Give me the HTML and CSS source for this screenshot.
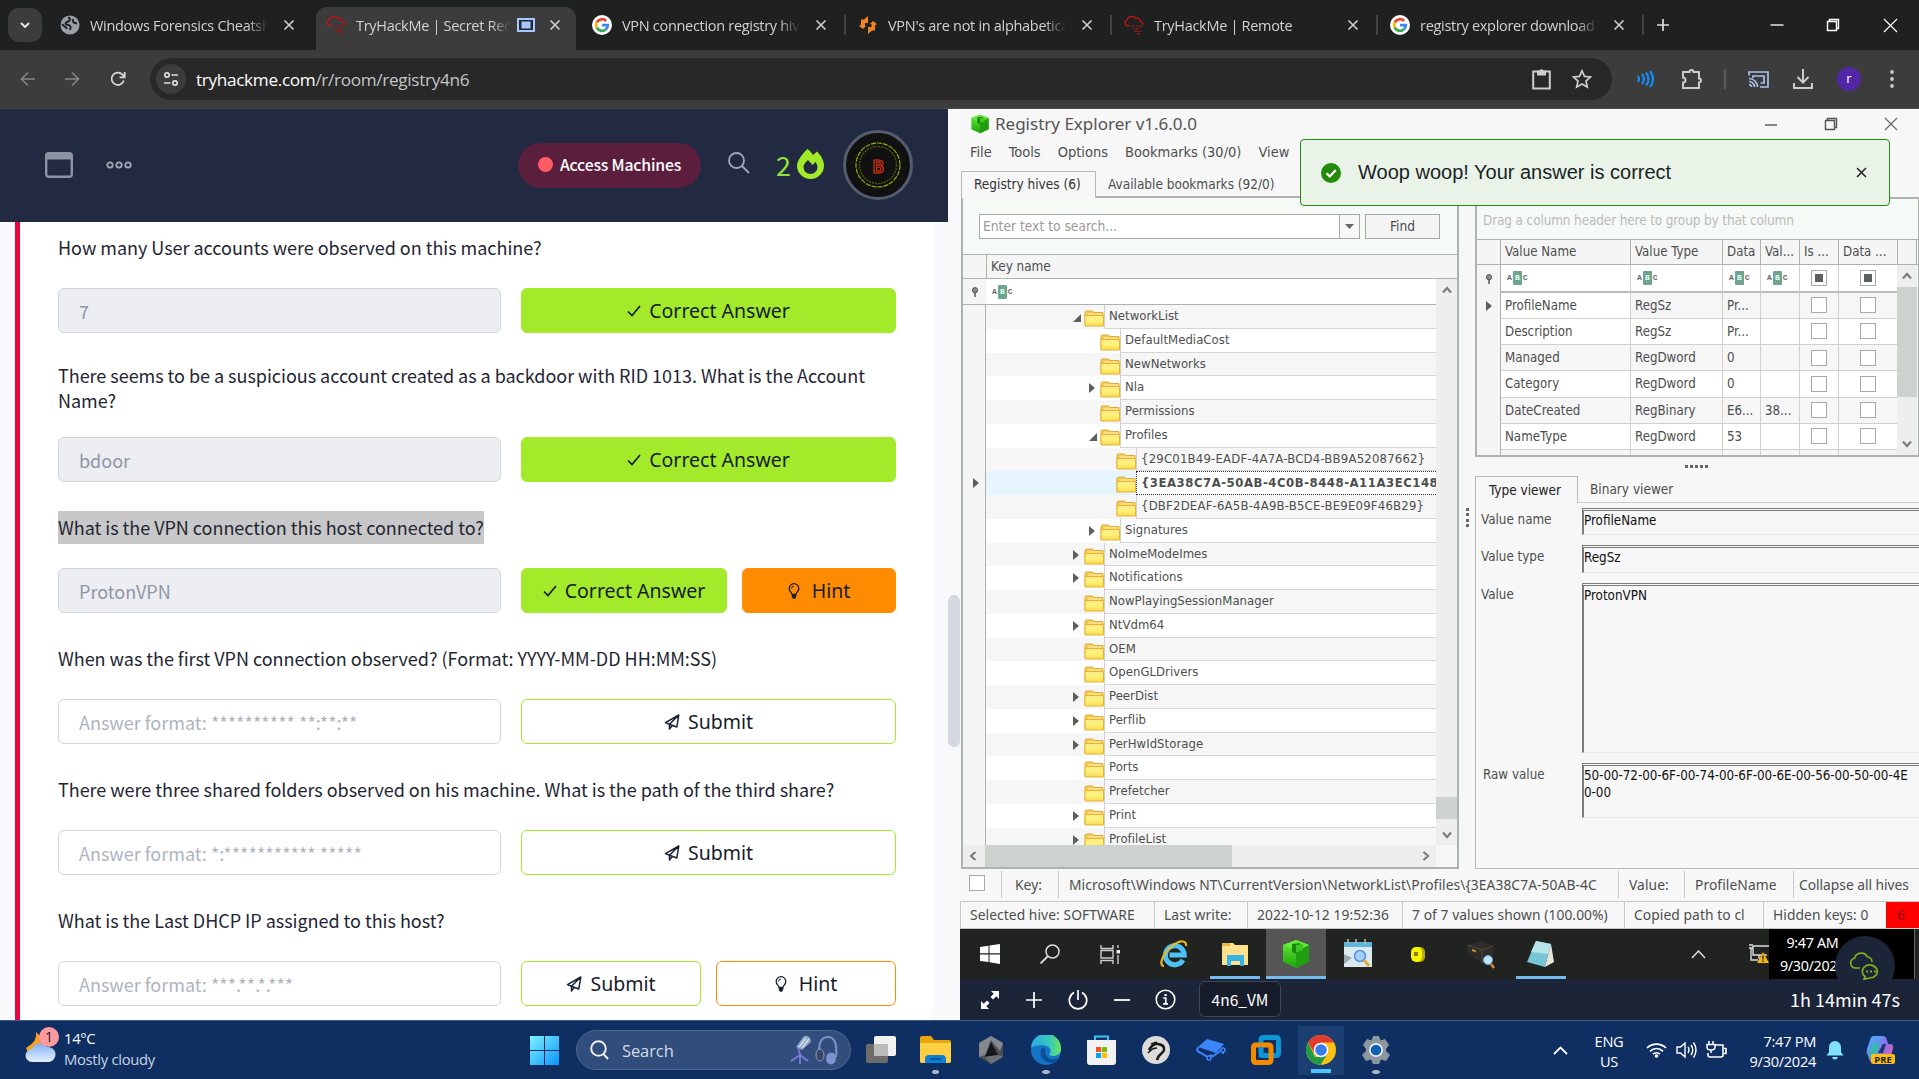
FILE: index.html
```html
<!DOCTYPE html>
<html lang="en">
<head>
<meta charset="utf-8">
<title>TryHackMe | Secret Recipe</title>
<link rel="stylesheet" href="styles.css">
</head>
<body>
<svg class="defs" width="0" height="0">
  <defs>
    <linearGradient id="gFolder" x1="0" y1="0" x2="0" y2="1"><stop offset="0" stop-color="#fdeb8c"/><stop offset=".5" stop-color="#fff27a"/><stop offset="1" stop-color="#f7d950"/></linearGradient>
    <linearGradient id="gWin" x1="0" y1="0" x2="1" y2="1"><stop offset="0" stop-color="#7ff3ff"/><stop offset="1" stop-color="#0a94fb"/></linearGradient>
    <linearGradient id="gCloud" x1="0" y1="0" x2="0" y2="1"><stop offset="0" stop-color="#7fb0f2"/><stop offset="1" stop-color="#e4efff"/></linearGradient>
    <linearGradient id="gEdge" x1="0" y1="0" x2="1" y2="0"><stop offset="0" stop-color="#2fa9e0"/><stop offset=".6" stop-color="#35c9c1"/><stop offset="1" stop-color="#6be25d"/></linearGradient>
    <linearGradient id="gGreen" x1="0" y1="0" x2="0" y2="1"><stop offset="0" stop-color="#66ee33"/><stop offset="1" stop-color="#1ea30c"/></linearGradient>
    <linearGradient id="gCop" x1="0" y1="0" x2="1" y2="1"><stop offset="0" stop-color="#35c1f5"/><stop offset=".5" stop-color="#8b6ff0"/><stop offset="1" stop-color="#fb5d8c"/></linearGradient>
  </defs>
  <symbol id="x" viewBox="0 0 12 12"><path d="M1.5 1.5l9 9M10.5 1.5l-9 9" stroke="currentColor" stroke-width="1.6" fill="none"/></symbol>
  <symbol id="google" viewBox="0 0 20 20"><circle cx="10" cy="10" r="10" fill="#fff"/><g fill="none" stroke-width="2.8"><path d="M14.1 5.9A5.8 5.8 0 0 0 4.8 7.4" stroke="#ea4335"/><path d="M4.8 7.4a5.8 5.8 0 0 0 0 5.2" stroke="#fbbc05"/><path d="M4.8 12.6a5.8 5.8 0 0 0 8.9 1.9" stroke="#34a853"/><path d="M13.7 14.5a5.8 5.8 0 0 0 2.1-4.3H10" stroke="#4285f4"/></g></symbol>
  <symbol id="thm" viewBox="0 0 22 22"><path d="M6 12H4a3.300 3.300 0 0 1-.3-6.500A4.800 4.800 0 0 1 12.500 3.800 4 4 0 0 1 18 7.500a2.500 2.500 0 0 1 2.500 3.500" fill="none" stroke="#d00d12" stroke-width="1.400"/><path d="M8 12h3M12.500 12h2M16 12.500h4M9.500 15h2M13 15h3M11 18h5M17 18h2M14 20.500h4" stroke="#96161a" stroke-width="1.500"/></symbol>
  <symbol id="folder" viewBox="0 0 20 17"><path d="M1 2.500Q1 1 2.500 1h6l1.500 1.500h9V15H1z" fill="#f2cb4e" stroke="#e0a93b"/><path d="M1 5.500h18.500V16H1z" fill="url(#gFolder)" stroke="#e8b232"/><path d="M4 4h14" stroke="#fff3b0"/></symbol>
  <symbol id="open" viewBox="0 0 8 8"><path d="M8 0v8H0z" fill="#5b5f5d"/></symbol>
  <symbol id="shut" viewBox="0 0 6 10"><path d="M0 0l6 5-6 5z" fill="#5b5f5d"/></symbol>
  <symbol id="pin" viewBox="0 0 8 10"><circle cx="4" cy="3.200" r="2.600" fill="#8a8d8c" stroke="#555"/><path d="M4 5.500V10" stroke="#555" stroke-width="1.500"/></symbol>
  <symbol id="check" viewBox="0 0 14 12"><path d="M1 6.500l4 4L13 1" fill="none" stroke="currentColor" stroke-width="1.700"/></symbol>
  <symbol id="send" viewBox="0 0 16 16"><path d="M14.800 1L1.500 8.600l4 1.700zM14.800 1L12.800 13l-7.300-2.700zM5.500 10.300V15l2.700-3.400" fill="none" stroke="#161f33" stroke-width="1.500" stroke-linejoin="round"/></symbol>
  <symbol id="bulb" viewBox="0 0 12 16"><path d="M4 11.500C4 9.500 1.200 8.600 1.200 5.500a4.800 4.800 0 0 1 9.600 0C10.800 8.600 8 9.500 8 11.500z" fill="none" stroke="#161f33" stroke-width="1.300"/><path d="M3.600 5.500A2.300 2.300 0 0 1 6 3.200" fill="none" stroke="#161f33"/><path d="M3.800 12h4.400v2L7 15.700H5L3.800 14z" fill="#161f33"/></symbol>
  <symbol id="up" viewBox="0 0 10 8"><path d="M1 6.500L5 2l4 4.500" fill="none" stroke="#7b7e7d" stroke-width="2.200"/></symbol>
  <symbol id="down" viewBox="0 0 10 8"><path d="M1 1.500L5 6l4-4.500" fill="none" stroke="#7b7e7d" stroke-width="2.200"/></symbol>
  <symbol id="cube" viewBox="0 0 30 30"><path d="M15 1l13 5v17l-13 6L2 23V6z" fill="url(#gGreen)"/><path d="M15 12l13-6v17l-13 6z" fill="#229f10"/><path d="M2 6l13-5 13 5-13 6z" fill="#63e936"/><path d="M11 5l8-1v9l-4 2-4-2z" fill="#17850b"/><path d="M15 6l7-1v6l-7 3z" fill="#3cc820"/></symbol>
  <symbol id="restore" viewBox="0 0 14 14"><path d="M3.500 3.500v-2h9v9h-2M1.500 3.500h9v9h-9z" fill="none" stroke="currentColor" stroke-width="1.400"/></symbol>
</svg>

<div class="screen">
  <header class="tabstrip">
    <div class="drop"><span><svg width="10" height="7" viewBox="0 0 10 7"><path d="M1 1l4 4 4-4" fill="none" stroke="#eee" stroke-width="1.800"/></svg></span></div>
    <div class="tab"><svg class="fav" viewBox="0 0 20 20"><circle cx="10" cy="10" r="9.500" fill="#9aa0a8"/><path d="M8 2.500c4 1 1 4-1 4.500s-2 2.500 1 3 3 2 2 5M13 4c-1 3 1 4 4 4.500M2 9c2 3 4 2 5 5" fill="none" stroke="#202222" stroke-width="2"/></svg><span class="label">Windows Forensics Cheatsh</span><svg class="close"><use href="#x"/></svg></div>
    <div class="tab active"><svg class="fav"><use href="#thm"/></svg><span class="label short">TryHackMe | Secret Reci</span><svg class="media" width="18" height="14" viewBox="0 0 18 14"><rect x="1" y="1" width="16" height="12" fill="#202a3c" stroke="#a8c7fa" stroke-width="2"/><rect x="4.500" y="3.500" width="9" height="7" fill="#a8c7fa"/></svg><svg class="close"><use href="#x"/></svg></div>
    <div class="tab"><svg class="fav"><use href="#google"/></svg><span class="label">VPN connection registry hiv</span><svg class="close"><use href="#x"/></svg><i></i></div>
    <div class="tab"><svg class="fav" viewBox="0 0 20 20"><path d="M10 1L6 4.500H3v5l-2 1.500 4 3 3-3H7V8h3zM10 19l4-3.500h3v-5L19 9l-4-3-3 3h1.500v3H10z" fill="#f58220"/></svg><span class="label">VPN's are not in alphabetica</span><svg class="close"><use href="#x"/></svg><i></i></div>
    <div class="tab"><svg class="fav"><use href="#thm"/></svg><span class="label">TryHackMe | Remote</span><svg class="close"><use href="#x"/></svg><i></i></div>
    <div class="tab"><svg class="fav"><use href="#google"/></svg><span class="label">registry explorer download</span><svg class="close"><use href="#x"/></svg><i></i></div>
    <div class="c"><svg width="14" height="14" viewBox="0 0 14 14"><path d="M7 1v12M1 7h12" stroke="#ddd" stroke-width="1.700"/></svg></div>
    <div></div>
    <div class="c"><svg width="14" height="14" viewBox="0 0 14 14"><path d="M.5 7h13" stroke="#fff" stroke-width="1.300"/></svg></div>
    <div class="c w"><svg width="14" height="14"><use href="#restore"/></svg></div>
    <div class="c"><svg width="15" height="15" viewBox="0 0 15 15"><path d="M1 1l13 13M14 1L1 14" stroke="#fff" stroke-width="1.200"/></svg></div>
  </header>

  <nav class="toolbar">
    <div class="c back"><svg width="16" height="16" viewBox="0 0 16 16"><path d="M15 8H2M8 1.500L1.500 8 8 14.500" fill="none" stroke="#858585" stroke-width="1.600"/></svg></div>
    <div class="c"><svg width="16" height="16" viewBox="0 0 16 16"><path d="M1 8h13M8 1.500L14.500 8 8 14.500" fill="none" stroke="#858585" stroke-width="1.600"/></svg></div>
    <div class="c"><svg width="16" height="16" viewBox="0 0 16 16"><path d="M13.800 9.500A6.200 6.200 0 1 1 12.500 3.700L14.500 6M14.700 1v5.300H9.500" fill="none" stroke="#d6d6d6" stroke-width="1.800"/></svg></div>
    <div class="omnibox">
      <span class="site"><svg width="16" height="16" viewBox="0 0 16 16"><g fill="none" stroke="#ddd" stroke-width="1.700"><circle cx="4" cy="4" r="2.200"/><path d="M8.500 4H15M1 12h6.500"/><circle cx="12" cy="12" r="2.200"/></g></svg></span>
      <span class="url"><b>tryhackme.com</b>/r/room/registry4n6</span>
      <svg width="19" height="22" viewBox="0 0 19 22"><path d="M1.200 3.500h16.600v17H1.200z" fill="none" stroke="#ccc" stroke-width="2"/><path d="M5 2.500h2.500a2.200 2.200 0 0 1 4 0H14v5H5z" fill="#ccc"/></svg>
      <svg class="star" width="20" height="20" viewBox="0 0 20 20"><path d="M10 1.800l2.500 5.600 6 .6-4.500 4 1.300 6-5.300-3.100L4.700 18 6 12 1.500 8l6-.6z" fill="none" stroke="#ccc" stroke-width="1.700"/></svg>
    </div>
    <div class="c"><svg width="18" height="18" viewBox="0 0 18 18"><path d="M2 6q2 3 0 6M6 4q4 5 0 10M10 2.500q5 6.500 0 13M14 1q6 8 0 16" fill="none" stroke="#168cf0" stroke-width="2.200"/></svg></div>
    <div class="c"><svg width="22" height="22" viewBox="0 0 22 22"><path d="M2 4h6.500a2 2 0 0 1 4 0H18v6.500a2 2 0 0 1 0 4V20H2v-5.500a2.500 2.500 0 0 0 0-5z" fill="none" stroke="#ccc" stroke-width="2"/></svg></div>
    <div class="c"><i class="vr"></i></div>
    <div class="c"><svg width="21" height="17" viewBox="0 0 21 17"><path d="M1 4.500V1h19v15h-8M5 7V5h11v7h-3.500M1 7.500a8.500 8.500 0 0 1 8.500 8.500M1 10.500A5.500 5.500 0 0 1 6.500 16M1 13.500A2.500 2.500 0 0 1 3.500 16" fill="none" stroke="#a8c1ea" stroke-width="1.700"/></svg></div>
    <div class="c"><svg width="20" height="20" viewBox="0 0 20 20"><path d="M10 0v13M4.500 8l5.500 5.500L15.500 8M1 14v5h18v-5" fill="none" stroke="#ccc" stroke-width="2"/></svg></div>
    <div class="c"><span class="profile">r</span></div>
    <div class="c"><svg width="4" height="18" viewBox="0 0 4 18"><g fill="#ccc"><circle cx="2" cy="2" r="1.900"/><circle cx="2" cy="9" r="1.900"/><circle cx="2" cy="16" r="1.900"/></g></svg></div>
  </nav>

  <div class="content">
    <main class="room">
      <div class="thmbar">
        <svg width="28" height="26" viewBox="0 0 28 26"><rect x="1.200" y="1.200" width="25.600" height="23.600" rx="2.500" fill="none" stroke="#8d93a3" stroke-width="2.400"/><path d="M1 2h26v5.500H1z" fill="#8d93a3"/></svg>
        <svg class="more" width="26" height="8" viewBox="0 0 26 8"><g fill="none" stroke="#a3a8b5" stroke-width="1.800"><circle cx="4" cy="4" r="2.700"/><circle cx="13" cy="4" r="2.700"/><circle cx="22" cy="4" r="2.700"/></g></svg>
        <div class="access"><i></i>Access Machines</div>
        <svg class="find" width="22" height="22" viewBox="0 0 22 22"><circle cx="8.500" cy="8.500" r="7.500" fill="none" stroke="#a3a8b5" stroke-width="1.800"/><path d="M14 14l7 7" stroke="#a3a8b5" stroke-width="1.800"/></svg>
        <span class="streak">2</span>
        <svg class="flame" width="27" height="30" viewBox="0 0 27 30"><path fill-rule="evenodd" d="M10.500 0c2 1.500 4.500 4 5.500 6l4-3.500C24 6.500 27 11.500 27 16.500A13.500 13.500 0 0 1 0 16.500C0 12 5.500 4.500 10.500 0zM11 11l4.500 5 3-3C20 15 20.500 17 20.500 18a7 7 0 0 1-14 0C6.500 16 9 12.500 11 11z" fill="#a3ea2a"/></svg>
        <div class="avatar"><svg width="48" height="48" viewBox="0 0 48 48"><circle cx="24" cy="24" r="22" fill="none" stroke="#9aa90a" stroke-width="1.200" stroke-dasharray="5 1"/><circle cx="24" cy="24" r="18.500" fill="none" stroke="#4b530c" stroke-width="1.500" stroke-dasharray="2 1"/></svg><b>B</b></div>
      </div>
      <div class="task">
        <div class="qa">
          <p>How many User accounts were observed on this machine?</p>
          <div class="row"><div class="input done">7</div><div class="btn ok"><svg width="14" height="12"><use href="#check"/></svg>Correct Answer</div></div>
          <p class="two">There seems to be a suspicious account created as a backdoor with RID 1013. What is the Account<br>Name?</p>
          <div class="row"><div class="input done">bdoor</div><div class="btn ok"><svg width="14" height="12"><use href="#check"/></svg>Correct Answer</div></div>
          <p><mark>What is the VPN connection this host connected to?</mark></p>
          <div class="row split"><div class="input done">ProtonVPN</div><div class="btn ok"><svg width="14" height="12"><use href="#check"/></svg>Correct Answer</div><div class="btn hint solid"><svg width="12" height="16"><use href="#bulb"/></svg>Hint</div></div>
          <p>When was the first VPN connection observed? (Format: YYYY-MM-DD HH:MM:SS)</p>
          <div class="row"><div class="input">Answer format: ********** **:**:**</div><div class="btn"><svg width="16" height="16"><use href="#send"/></svg>Submit</div></div>
          <p>There were three shared folders observed on his machine. What is the path of the third share?</p>
          <div class="row"><div class="input">Answer format: *:*********** *****</div><div class="btn"><svg width="16" height="16"><use href="#send"/></svg>Submit</div></div>
          <p>What is the Last DHCP IP assigned to this host?</p>
          <div class="row half"><div class="input">Answer format: ***.**.*.***</div><div class="btn"><svg width="16" height="16"><use href="#send"/></svg>Submit</div><div class="btn hint"><svg width="12" height="16"><use href="#bulb"/></svg>Hint</div></div>
        </div>
      </div>
    </main>
    <div class="gutter"><i></i></div>

    <section class="vm">
      <div class="title"><svg width="20" height="20"><use href="#cube"/></svg><span>Registry Explorer v1.6.0.0</span>
        <svg class="tmin" width="12" height="12" viewBox="0 0 12 12"><path d="M0 7h12" stroke="#555" stroke-width="1.400"/></svg><svg class="tmax" width="14" height="14"><use href="#restore"/></svg><svg class="tclose" width="14" height="14" viewBox="0 0 14 14"><path d="M1 1l12 12M13 1L1 13" stroke="#666" stroke-width="1.200"/></svg></div>
      <div class="menu"><span>File</span><span>Tools</span><span>Options</span><span>Bookmarks (30/0)</span><span>View</span></div>
      <div class="panes">
        <div class="hives">
          <div class="ltabs"><span class="on">Registry hives (6)</span><span>Available bookmarks (92/0)</span></div>
          <div class="lbox">
            <div class="searchrow"><div class="sbox"><span>Enter text to search...</span><i><svg width="9" height="5" viewBox="0 0 9 5"><path d="M0 0h9L4.500 5z" fill="#666"/></svg></i></div><div class="findbtn">Find</div></div>
            <div class="keyhead"><span></span><span>Key name</span></div>
            <div class="treewrap">
              <div class="tree">
                <div class="filter"><span><svg width="8" height="10"><use href="#pin"/></svg></span><em class="abc">A<b>B</b>C</em></div>
                <div class="rows">
                  <div class="gut"><svg width="6" height="10"><use href="#shut"/></svg></div>
                  <div class="list">
                    <div class="k l0"><svg class="ar"><use href="#open"/></svg><svg class="fo"><use href="#folder"/></svg><span>NetworkList</span></div>
                    <div class="k l1"><svg class="fo"><use href="#folder"/></svg><span>DefaultMediaCost</span></div>
                    <div class="k l1"><svg class="fo"><use href="#folder"/></svg><span>NewNetworks</span></div>
                    <div class="k l1"><svg class="ar sh"><use href="#shut"/></svg><svg class="fo"><use href="#folder"/></svg><span>Nla</span></div>
                    <div class="k l1"><svg class="fo"><use href="#folder"/></svg><span>Permissions</span></div>
                    <div class="k l1"><svg class="ar"><use href="#open"/></svg><svg class="fo"><use href="#folder"/></svg><span>Profiles</span></div>
                    <div class="k l2"><svg class="fo"><use href="#folder"/></svg><span>{29C01B49-EADF-4A7A-BCD4-BB9A52087662}</span></div>
                    <div class="k l2 sel"><svg class="fo"><use href="#folder"/></svg><span>{3EA38C7A-50AB-4C0B-8448-A11A3EC148</span></div>
                    <div class="k l2"><svg class="fo"><use href="#folder"/></svg><span>{DBF2DEAF-6A5B-4A9B-B5CE-BE9E09F46B29}</span></div>
                    <div class="k l1"><svg class="ar sh"><use href="#shut"/></svg><svg class="fo"><use href="#folder"/></svg><span>Signatures</span></div>
                    <div class="k l0"><svg class="ar sh"><use href="#shut"/></svg><svg class="fo"><use href="#folder"/></svg><span>NoImeModeImes</span></div>
                    <div class="k l0"><svg class="ar sh"><use href="#shut"/></svg><svg class="fo"><use href="#folder"/></svg><span>Notifications</span></div>
                    <div class="k l0"><svg class="fo"><use href="#folder"/></svg><span>NowPlayingSessionManager</span></div>
                    <div class="k l0"><svg class="ar sh"><use href="#shut"/></svg><svg class="fo"><use href="#folder"/></svg><span>NtVdm64</span></div>
                    <div class="k l0"><svg class="fo"><use href="#folder"/></svg><span>OEM</span></div>
                    <div class="k l0"><svg class="fo"><use href="#folder"/></svg><span>OpenGLDrivers</span></div>
                    <div class="k l0"><svg class="ar sh"><use href="#shut"/></svg><svg class="fo"><use href="#folder"/></svg><span>PeerDist</span></div>
                    <div class="k l0"><svg class="ar sh"><use href="#shut"/></svg><svg class="fo"><use href="#folder"/></svg><span>Perflib</span></div>
                    <div class="k l0"><svg class="ar sh"><use href="#shut"/></svg><svg class="fo"><use href="#folder"/></svg><span>PerHwIdStorage</span></div>
                    <div class="k l0"><svg class="fo"><use href="#folder"/></svg><span>Ports</span></div>
                    <div class="k l0"><svg class="fo"><use href="#folder"/></svg><span>Prefetcher</span></div>
                    <div class="k l0"><svg class="ar sh"><use href="#shut"/></svg><svg class="fo"><use href="#folder"/></svg><span>Print</span></div>
                    <div class="k l0"><svg class="ar sh"><use href="#shut"/></svg><svg class="fo"><use href="#folder"/></svg><span>ProfileList</span></div>
                  </div>
                </div>
              </div>
              <div class="vscroll"><svg width="10" height="8"><use href="#up"/></svg><i></i><svg width="10" height="8"><use href="#down"/></svg></div>
            </div>
            <div class="hscroll"><svg width="8" height="10" viewBox="0 0 8 10"><path d="M6.500 1L2 5l4.500 4" fill="none" stroke="#7b7e7d" stroke-width="2.200"/></svg><i></i><svg class="r" width="8" height="10" viewBox="0 0 8 10"><path d="M1.500 1L6 5 1.500 9" fill="none" stroke="#7b7e7d" stroke-width="2.200"/></svg><b></b></div>
          </div>
        </div>
        <div class="splitter"><i></i></div>
        <div class="values">
          <div class="grid">
            <div class="group">Drag a column header here to group by that column</div>
            <div class="gr head"><span></span><span>Value Name</span><span>Value Type</span><span>Data</span><span>Val...</span><span>Is ...</span><span>Data ...</span><span></span></div>
            <div class="gbody">
              <div class="grows">
                <div class="gr flt"><span class="m"><svg width="8" height="10"><use href="#pin"/></svg></span><span><em class="abc">A<b>B</b>C</em></span><span><em class="abc">A<b>B</b>C</em></span><span><em class="abc">A<b>B</b>C</em></span><span><em class="abc">A<b>B</b>C</em></span><span class="m"><i class="cb f"></i></span><span class="m"><i class="cb f"></i></span></div>
                <div class="gr alt"><span class="m"><svg width="6" height="10"><use href="#shut"/></svg></span><span class="focus">ProfileName</span><span>RegSz</span><span>Pr...</span><span></span><span class="m"><i class="cb"></i></span><span class="m"><i class="cb"></i></span></div>
                <div class="gr"><span></span><span>Description</span><span>RegSz</span><span>Pr...</span><span></span><span class="m"><i class="cb"></i></span><span class="m"><i class="cb"></i></span></div>
                <div class="gr alt"><span></span><span>Managed</span><span>RegDword</span><span>0</span><span></span><span class="m"><i class="cb"></i></span><span class="m"><i class="cb"></i></span></div>
                <div class="gr"><span></span><span>Category</span><span>RegDword</span><span>0</span><span></span><span class="m"><i class="cb"></i></span><span class="m"><i class="cb"></i></span></div>
                <div class="gr alt"><span></span><span>DateCreated</span><span>RegBinary</span><span>E6...</span><span>38...</span><span class="m"><i class="cb"></i></span><span class="m"><i class="cb"></i></span></div>
                <div class="gr"><span></span><span>NameType</span><span>RegDword</span><span>53</span><span></span><span class="m"><i class="cb"></i></span><span class="m"><i class="cb"></i></span></div>
                <div class="gr alt"><span></span><span></span><span></span><span></span><span></span><span class="m"><i class="cb"></i></span><span class="m"><i class="cb"></i></span></div>
              </div>
              <div class="vscroll g"><svg width="10" height="8"><use href="#up"/></svg><i></i><svg width="10" height="8"><use href="#down"/></svg></div>
            </div>
          </div>
          <div class="hdots"><i></i></div>
          <div class="vtabs"><span class="on">Type viewer</span><span>Binary viewer</span></div>
          <div class="form">
            <label>Value name</label><div class="field">ProfileName</div>
            <label>Value type</label><div class="field">RegSz</div>
            <label>Value</label><div class="field">ProtonVPN</div>
            <label class="raw">Raw value</label><div class="field bytes">50-00-72-00-6F-00-74-00-6F-00-6E-00-56-00-50-00-4E<br>0-00</div>
          </div>
        </div>
      </div>
      <div class="st1"><span class="m"><i class="cb"></i></span><span>Key:</span><span class="path"><u>Microsoft\Windows NT\CurrentVersion\NetworkList\Profiles\{3EA38C7A-50AB-4C</u></span><span>Value:</span><span>ProfileName</span><span>Collapse all hives</span></div>
      <div class="st2"><span>Selected hive: SOFTWARE</span><span>Last write:</span><span>2022-10-12 19:52:36</span><span>7 of 7 values shown (100.00%)</span><span>Copied path to cl</span><span>Hidden keys: 0</span><span class="red">6</span></div>
      <div class="vmtask">
        <div class="c"><svg width="20" height="20" viewBox="0 0 20 20"><path d="M0 3l8.500-1.200v7.500H0zM9.500 1.600L20 0v9.300H9.500zM0 10.500h8.500V18L0 17zM9.500 10.500H20V20L9.500 18.300z" fill="#fff"/></svg></div>
        <div class="c"><svg width="20" height="20" viewBox="0 0 20 20"><circle cx="12.500" cy="7.500" r="6.500" fill="none" stroke="#ddd" stroke-width="1.500"/><path d="M8 12L.5 19.500" stroke="#ddd" stroke-width="1.800"/></svg></div>
        <div class="c"><svg width="21" height="19" viewBox="0 0 21 19"><path d="M1 0v3.500h12V0M1 19v-3.500h12V19M1 5.500h12v7.500H1zM18 0v3M18 10v9" fill="none" stroke="#ccc" stroke-width="1.400"/><path d="M16.500 5h3.500v3.500h-3.500z" fill="#eee"/></svg></div>
        <div class="c"><svg width="28" height="29" viewBox="0 0 28 29"><path d="M23 20a9.500 9.500 0 1 1 1.300-5H9.500" fill="none" stroke="#4cc1f3" stroke-width="5"/><path d="M4 26C-2 26 3 13 12 6S27 1 26 6" fill="none" stroke="#eab922" stroke-width="2.200"/></svg></div>
        <div class="c run a"><svg width="28" height="24" viewBox="0 0 28 24"><path d="M1 1h11l2 2h13v20H1z" fill="#fde18c"/><path d="M1 1h8v3H1z" fill="#e7b642"/><path d="M6 13h17v11h-4v-5h-9v5H6z" fill="#35b2e6"/></svg></div>
        <div class="c on"><svg width="30" height="30"><use href="#cube"/></svg></div>
        <div class="c"><svg width="30" height="30" viewBox="0 0 30 30"><path d="M1 3h28v25H1z" fill="#dceaf0"/><path d="M1 3h28v5H1z" fill="#5fb5da"/><path d="M5 0v5M13 0v5M22 0v5" stroke="#bbb" stroke-width="1.500"/><path d="M1 15l8 4-8 6" fill="#9aa9b0"/><circle cx="17" cy="17" r="5.500" fill="#a4d0ff" stroke="#5292d8" stroke-width="1.500"/><path d="M21 21l5 6" stroke="#e6a93d" stroke-width="3"/></svg></div>
        <div class="c"><svg width="14" height="15" viewBox="0 0 14 15"><rect x="3" width="11" height="15" rx="5" fill="#b8a900"/><rect width="11" height="15" rx="5" fill="#f8f400"/><rect x="3" y="5" width="4" height="4" fill="#8a8310"/></svg></div>
        <div class="c"><svg width="30" height="30" viewBox="0 0 30 30"><path d="M1 6l15-4 11 5v13l-10 5L2 15z" fill="#2e2c29"/><path d="M1 6l15 5 11-4M16 11v13" stroke="#514b42" fill="none"/><path d="M6 10l4 1.500v2L6 12z" fill="#d98f22"/><circle cx="22" cy="21" r="4.500" fill="#bfe6fb" stroke="#7aa6c8"/><path d="M25 25l3 4" stroke="#d98640" stroke-width="2.500"/></svg></div>
        <div class="c run b"><svg width="30" height="28" viewBox="0 0 30 28"><path d="M10 1l15 3-6 23L1 22z" fill="#76c6d5"/><path d="M10 1l15 3-3 10L5 12z" fill="#b7e5ea"/><path d="M25 4l3 18-9 5z" fill="#e6e6dd"/></svg></div>
        <div></div>
        <div class="c"><svg width="15" height="9" viewBox="0 0 15 9"><path d="M1 8l6.500-7L14 8" fill="none" stroke="#ddd" stroke-width="1.500"/></svg></div>
        <div class="c e"><svg width="21" height="20" viewBox="0 0 21 20"><path d="M5 2h16M5 2v9h14M1 1h4M1 4h4M3 4v12h7M11 11v4" fill="none" stroke="#ddd" stroke-width="1.400"/><path d="M15 8l6 11H9z" fill="#f7b50d"/><path d="M15 11.500v4M15 16.500v1.500" stroke="#222" stroke-width="1.300"/></svg></div>
        <div class="clock">9:47 AM<br>9/30/2024</div>
        <div class="peek"></div>
      </div>
      <div class="vmbar">
        <div class="c"><svg width="20" height="20" viewBox="0 0 20 20"><path d="M11 1h8v8l-2.700-2.700L13 9.500 10.500 7l3.200-3.200zM9 19H1v-8l2.700 2.700L7 10.500 9.500 13l-3.200 3.200z" fill="#fff"/></svg></div>
        <div class="c"><svg width="16" height="16" viewBox="0 0 16 16"><path d="M8 0v16M0 8h16" stroke="#fff" stroke-width="1.700"/></svg></div>
        <div class="c"><svg width="20" height="20" viewBox="0 0 20 20"><path d="M6 2.500a8.700 8.700 0 1 0 8 0M10 0v10" fill="none" stroke="#fff" stroke-width="1.700"/></svg></div>
        <div class="c"><svg width="16" height="4" viewBox="0 0 16 4"><path d="M0 2h16" stroke="#fff" stroke-width="1.800"/></svg></div>
        <div class="c info"><svg width="21" height="21" viewBox="0 0 21 21"><circle cx="10.500" cy="10.500" r="9.300" fill="none" stroke="#fff" stroke-width="1.600"/><path d="M9.500 5h2.200v2H9.500z" fill="#fff"/><path d="M8.200 9h2.600v5.500M8 14.800h5" fill="none" stroke="#fff" stroke-width="1.700"/></svg></div>
        <div class="vmname">4n6_VM</div>
        <div class="timer">1h 14min 47s</div>
      </div>
      <div class="toast"><svg width="20" height="20" viewBox="0 0 20 20"><circle cx="10" cy="10" r="10" fill="#238a0c"/><path d="M5.500 10.200l3.300 3.200 6-6.300" fill="none" stroke="#fff" stroke-width="2.200"/></svg><span>Woop woop! Your answer is correct</span><svg width="11" height="11" viewBox="0 0 11 11"><path d="M1 1l9 9M10 1l-9 9" stroke="#222" stroke-width="1.500"/></svg></div>
      <div class="chat"><svg width="32" height="28" viewBox="0 0 32 28"><path d="M11 16H6a5 5 0 0 1-.5-9.800A7 7 0 0 1 18.500 5a5 5 0 0 1 4.500 5" fill="none" stroke="#7fae1f" stroke-width="1.700"/><path d="M16 24.500a7.500 6.500 0 1 1 5 1.500l-6 1.200z" fill="none" stroke="#7fae1f" stroke-width="1.700"/><path d="M17 19.500h2M21 19.500h2M25 19.500h2" stroke="#7fae1f" stroke-width="2"/></svg></div>
    </section>
  </div>

  <footer class="taskbar">
    <div class="weather">
      <svg width="38" height="38" viewBox="0 0 38 38"><path d="M13 6q2 9-10 16 2 6 8 6l10-14z" fill="#f9a01c"/><path d="M9 36a6.500 6.500 0 0 1 0-13 8.500 8.500 0 0 1 15-2 7.500 7.500 0 0 1 2 15z" fill="url(#gCloud)"/><circle cx="26" cy="11" r="10" fill="#fc9aa0"/><text x="26" y="16" text-anchor="middle" font-size="14" fill="#222">1</text></svg>
      <div>14°C<br><span>Mostly cloudy</span></div>
    </div>
    <div class="c"><svg width="29" height="29" viewBox="0 0 29 29"><path d="M0 0h14v14H0zM15 0h14v14H15zM0 15h14v14H0zM15 15h14v14H15z" fill="url(#gWin)"/></svg></div>
    <div class="wsearch"><svg width="19" height="20" viewBox="0 0 19 20"><circle cx="8.500" cy="8.500" r="7.300" fill="none" stroke="#eee" stroke-width="2"/><path d="M13.500 14l4.500 5" stroke="#eee" stroke-width="2"/></svg><span>Search</span>
      <svg width="50" height="32" viewBox="0 0 50 32"><path d="M8 13L15 3q4-3 7 1l1 4-9 8z" fill="#8ea1c8"/><path d="M11 13l7-9M14 14l7-9" stroke="#cfe3e4" stroke-width="1.500"/><path d="M10 14l2 7-9 6M12 21l8 6M12 19v11" fill="none" stroke="#7f7bd8" stroke-width="1.800"/><path d="M31 21Q30 3 40 3t8 20" fill="none" stroke="#7690c6" stroke-width="2.200"/><ellipse cx="32" cy="21" rx="4" ry="6" fill="#3e4562" stroke="#8b9ccb"/><ellipse cx="43" cy="24.500" rx="5" ry="6" fill="#7d93cf"/></svg></div>
    <div class="c"><svg width="30" height="30" viewBox="0 0 30 30"><rect y="9" width="22" height="19" rx="2" fill="#6d6c6b"/><rect x="8" y="1" width="22" height="20" rx="2" fill="#f1f1f1"/><path d="M8 9h14v12H8z" fill="#bcbcbc"/></svg></div>
    <div class="c dot"><svg width="31" height="28" viewBox="0 0 31 28"><path d="M0 2Q0 0 2 0h9l3 4h15q2 0 2 2v19q0 2-2 2H2q-2 0-2-2z" fill="#e9a60d"/><path d="M0 7h31v18q0 2-2 2H2q-2 0-2-2z" fill="#ffcf42"/><path d="M5 27v-4q0-4 4-4h13q4 0 4 4v4z" fill="#0f7ed6"/><path d="M10 23h11" stroke="#0a4d8c" stroke-width="1.500"/></svg></div>
    <div class="c"><svg width="28" height="30" viewBox="0 0 28 30"><path d="M14 1l12 7v14l-12 7L2 22V8z" fill="#4b5057"/><path d="M14 1l12 7-3 8L14 5 8 20l-6 2V8z" fill="#85898e"/><path d="M14 7l7 13-13 2z" fill="#15181c"/><path d="M8 22l13-2 5 2-12 7z" fill="#6b7076"/></svg></div>
    <div class="c dot"><svg width="30" height="30" viewBox="0 0 30 30"><circle cx="15" cy="15" r="15" fill="#1574c8"/><path d="M0 13A15 15 0 0 1 30 14c0 5-4 7-8 7-5 0-4-2-3-3 2-3-1-8-8-8S0 13 0 13z" fill="url(#gEdge)"/><path d="M11 13c-4 6 0 15 10 15l4-2c2-1 3-2 2.500-3-7 3-14 0-13-7 .2-2-2-4-3.500-3z" fill="#0d4f96"/></svg></div>
    <div class="c"><svg width="29" height="30" viewBox="0 0 29 30"><path d="M8 6V1.500h13V6" fill="none" stroke="#3cc1f5" stroke-width="2.200"/><path d="M0 5h29v22q0 3-3 3H3q-3 0-3-3z" fill="#f2f2f2"/><path d="M9 12h5v5H9z" fill="#f25022"/><path d="M15 12h5v5h-5z" fill="#7fba00"/><path d="M9 18h5v5H9z" fill="#00a4ef"/><path d="M15 18h5v5h-5z" fill="#ffb900"/></svg></div>
    <div class="c"><svg width="28" height="28" viewBox="0 0 28 28"><circle cx="14" cy="14" r="14" fill="#dcdbd9"/><path d="M7 14q4-7 9-6 7 1 6 6c-1 4-6 4-7 10" fill="none" stroke="#191919" stroke-width="2.600"/><path d="M6 17q4-5 9-5M9 8l6-2" fill="none" stroke="#191919" stroke-width="1.500"/></svg></div>
    <div class="c"><svg width="30" height="24" viewBox="0 0 30 24"><path d="M11 1l17 5-8 9L2 9z" fill="#3c85fa"/><path d="M3 9q-4 3 0 5l9 5 4-2M20 16l7-5v5M16 19l4-3" fill="none" stroke="#3c85fa" stroke-width="2"/><circle cx="13" cy="20" r="2" fill="#0f2f63" stroke="#3c85fa" stroke-width="1.500"/><circle cx="27" cy="12" r="2" fill="#0f2f63" stroke="#3c85fa" stroke-width="1.500"/></svg></div>
    <div class="c"><svg width="30" height="30" viewBox="0 0 30 30"><rect x="10" y="2.500" width="17.500" height="18" rx="2" fill="none" stroke="#0b96d6" stroke-width="5"/><rect x="2.500" y="10" width="17.500" height="17.500" rx="2" fill="none" stroke="#f38b00" stroke-width="5"/><path d="M10 12v8.500h7" fill="none" stroke="#0b96d6" stroke-width="4"/></svg></div>
    <div class="c chrome"><svg width="30" height="30" viewBox="0 0 30 30"><circle cx="15" cy="15" r="15" fill="#fbc116"/><path d="M2 7.500A15 15 0 0 1 28 7.500H15l-6.500 11z" fill="#e33b2e"/><path d="M2 7.500A15 15 0 0 0 14.500 30L21.500 18.700 15 22H9z" fill="#229a48"/><circle cx="15" cy="15" r="7.300" fill="#fff"/><circle cx="15" cy="15" r="5.800" fill="#3a7cec"/></svg></div>
    <div class="c dot"><svg width="30" height="28" viewBox="0 0 30 28"><path d="M12 0h6l1.500 4.500L24 3l4 6-3 4v2l4 4-4 6-5-1.500L18 28h-6l-2-4.500L5 25l-4-6 4-4v-2L2 9l4-6 4.500 1.500z" fill="#8b97a0"/><circle cx="15" cy="14" r="7" fill="#e8eef2"/><circle cx="15" cy="14" r="5.300" fill="#0e5fb4"/></svg></div>
    <div></div>
    <div class="c"><svg width="15" height="9" viewBox="0 0 15 9"><path d="M1 8l6.500-6.500L14 8" fill="none" stroke="#fff" stroke-width="1.800"/></svg></div>
    <div class="lang">ENG<br>US</div>
    <div class="c"><svg width="21" height="16" viewBox="0 0 21 16"><g fill="none" stroke="#fff" stroke-width="1.700"><path d="M1 6a13.500 13.500 0 0 1 19 0M4 9.300a9 9 0 0 1 13 0M7 12.200a5 5 0 0 1 7 0"/></g><circle cx="10.500" cy="14" r="1.800" fill="#fff"/></svg></div>
    <div class="c"><svg width="21" height="18" viewBox="0 0 21 18"><path d="M1 6h3.500L9 2v14l-4.500-4H1zM12 6q2 3 0 6M15 4q3.500 5 0 10M17.500 1.500q5 7.500 0 15" fill="none" stroke="#fff" stroke-width="1.400"/></svg></div>
    <div class="c"><svg width="22" height="18" viewBox="0 0 22 18"><path d="M10 4h8v10q0 2-2 2H5q-2 0-2-2v-2M19 7.500h2v5h-2" fill="none" stroke="#fff" stroke-width="1.600"/><path d="M4 0v3M8 0v3M2 3.500h8V6q0 3-4 3T2 6zM6 9v3" fill="none" stroke="#fff" stroke-width="1.500"/></svg></div>
    <div class="wclock">7:47 PM<br>9/30/2024</div>
    <div class="c"><svg width="18" height="20" viewBox="0 0 18 20"><path d="M3 7a6 6 0 0 1 12 0v5l2.500 3.500H.5L3 12z" fill="#80e2ff"/><path d="M6 17h6q-.5 2.500-3 2.500T6 17z" fill="#80e2ff"/></svg></div>
    <div class="c"><svg width="30" height="30" viewBox="0 0 30 30"><path d="M9 1h9q3 0 4 4l1 4h2q4 0 3 5l-3 9q-2 5-5 5H9q-4 0-5-4l-1-4q-2-1-1-6L5 5q1-4 4-4z" fill="url(#gCop)"/><path d="M10 8h5l-4 15H4q-1-3 1-8 2-7 5-7z" fill="#37b7b0"/><path d="M18 9h3l-3 9h-5z" fill="#143a70"/><rect x="6" y="19" width="24" height="10" rx="2" fill="#f8bd16"/><text x="18" y="27.500" text-anchor="middle" font-size="9.500" font-weight="700" fill="#222">PRE</text></svg></div>
  </footer>
</div>
</body>
</html>
```
FILE: styles.css
```css
* { box-sizing: border-box; }
body { margin: 0; font-family: "Open Sans", "Noto Sans", sans-serif; }
i, em { font-style: normal; }
svg { display: block; flex: none; }
.defs { position: absolute; }
.screen { width: 1919px; height: 1079px; overflow: hidden; display: grid; grid-template-rows: 50px 59px 911px 59px; }
.c { display: flex; align-items: center; justify-content: center; }

/* browser tabs */
.tabstrip { background: #1f2121; display: grid; grid-template-columns: 50px repeat(6, 266px) 34px 69px 56px 56px 58px; color: #ddd; }
.drop { display: flex; align-items: center; padding-left: 8px; }
.drop span { width: 34px; height: 34px; border-radius: 11px; background: #3c3c3c; display: flex; align-items: center; justify-content: center; }
.tab { display: flex; align-items: center; padding-left: 10px; font-size: 14.5px; letter-spacing: -.3px; color: #d0d2d2; }
.tab.active { background: #3c3c3c; border-radius: 11px 11px 0 0; margin: 7px 6px 0 0; padding-bottom: 7px; width: 260px; }
.fav { width: 20px; height: 20px; margin-right: 10px; }
.label { width: 178px; white-space: nowrap; overflow: hidden; -webkit-mask-image: linear-gradient(to right, #000 88%, transparent); mask-image: linear-gradient(to right, #000 88%, transparent); }
.label.short { width: 154px; }
.media { margin: 0 0 0 7px; }
.close { width: 12px; height: 12px; margin-left: 15px; }
.media + .close { margin-left: 14px; }
.tab i { width: 2px; height: 20px; background: #414343; margin-left: 17px; }
.w { color: #fff; }

/* address row */
.toolbar { background: #3c3c3c; border-bottom: 1px solid #4a4a46; display: grid; grid-template-columns: 50px 44px 48px 1470px 66px 28px 38px 28px 62px 30px 55px; }
.back { padding-left: 5px; }
.omnibox { height: 42px; margin: 8px 0 0 8px; width: 1462px; border-radius: 21px; background: #282828; display: flex; align-items: center; padding-right: 20px; }
.site { width: 30px; height: 30px; margin-left: 6px; border-radius: 50%; background: #3c3c3c; display: flex; align-items: center; justify-content: center; }
.url { flex: 1; margin-left: 10px; font-size: 17.200px; letter-spacing: -.33px; color: #c3c5c5; }
.url b { font-weight: 400; color: #fff; }
.star { margin-left: 21px; }
.vr { width: 2px; height: 20px; background: #5a5c5c; }
.profile { width: 24px; height: 24px; border-radius: 50%; background: #5127a7; color: #fff; font-size: 13px; line-height: 22px; text-align: center; }

/* page */
.content { display: grid; grid-template-columns: 948px 12px 959px; min-height: 0; }
.room { font-family: "Noto Sans CJK SC", "Noto Sans", sans-serif; background: #f9f9fb; display: grid; grid-template-rows: 113px 798px; min-height: 0; overflow: hidden; }
.thmbar { background: #212a41; display: flex; align-items: center; padding: 0 0 1px 45px; color: #fff; }
.more { margin-left: 33px; }
.access { margin-left: 386px; width: 183px; height: 45px; border-radius: 23px; background: #5b1e3d; display: flex; align-items: center; justify-content: center; gap: 7px; font-size: 15.800px; font-weight: 500; letter-spacing: -.2px; line-height: 43px; padding-bottom: 2px; }
.access i { width: 15px; height: 15px; border-radius: 50%; background: #ff5c67; }
.find { margin: 0 0 4px 27px; }
.streak { margin: 0 0 2px 26px; width: 15px; font-size: 27px; color: #8fe23a; }
.flame { margin-left: 6px; margin-bottom: 2px; }
.avatar { margin-left: 19px; width: 70px; height: 70px; border-radius: 50%; border: 3px solid #555c6f; background: #111; display: grid; place-items: center; }
.avatar > * { grid-area: 1 / 1; }
.avatar b { font-size: 17px; line-height: 1; color: #111; -webkit-text-stroke: 1.200px #d0300e; }
.task { margin: 0 15px; border-left: 5px solid #e8043f; background: #fff; overflow: hidden; }
.qa { padding: 13px 37px 0 38px; }
.qa p { margin: 33px 0 28px; height: 25px; line-height: 25px; font-size: 18px; letter-spacing: -.03px; color: #1f2633; white-space: nowrap; }
.qa p:first-child { margin-top: 0; }
.qa p.two { margin: 30px 0 24px; height: 50px; }
.qa mark { background: #c8c8c8; color: inherit; display: inline-block; height: 33px; line-height: 33px; margin-top: -4px; }
.row { display: grid; grid-template-columns: 443px 375px; grid-template-rows: 45px; column-gap: 20px; height: 45px; }
.row.split { grid-template-columns: 443px 20px 206px 15px 154px; column-gap: 0; }
.row.half { grid-template-columns: 443px 20px 180px 15px 180px; column-gap: 0; }
.row .btn:nth-child(2):not(:last-child) { grid-column: 3; }
.row .btn:nth-child(3) { grid-column: 5; }
.input { border: 1px solid #d1d5dd; border-radius: 6px; padding: 0 20px; line-height: 44px; height: 45px; font-size: 18px; color: #aeb4c0; white-space: nowrap; }
.input.done { background: #edeef2; color: #8f96a6; }
.btn { font-family: "Noto Sans", sans-serif; border: 1.500px solid #a3ea2a; border-radius: 6px; display: flex; align-items: center; justify-content: center; gap: 8px; font-size: 19.500px; line-height: 42px; color: #151c2b; }
.btn.ok { background: #a3ea2a; }
.btn.hint { border-color: #ff8c00; gap: 12px; }
.btn.solid { background: #ff8c00; }
.gutter { background: #f9f9fb; }
.gutter i { display: block; height: 152px; margin-top: 486px; border-radius: 6px; background: #d3d8e1; }

/* remote desktop */
.vm { position: relative; display: grid; grid-template-rows: 31px 31px 698px 32px 28px 50px 41px; background: #f7f7f7; color: #4c4f4e; font-family: "DejaVu Sans Condensed", "DejaVu Sans", sans-serif; font-stretch: condensed; font-size: 13px; min-height: 0; white-space: nowrap; }
.title { display: flex; align-items: center; padding: 0 0 2px 10px; color: #555; }
.title span { margin-left: 5px; width: 770px; font-family: "Noto Sans", sans-serif; font-size: 17px; }
.tmax { margin-left: 47px; }
.tclose { margin-left: 46px; }
.menu { display: flex; align-items: center; padding: 0 0 7px 10px; gap: 17px; font-size: 14.500px; }
.panes { display: grid; grid-template-columns: 500px 15px 444px; min-height: 0; }
.hives { padding-left: 1px; display: grid; grid-template-rows: 27px 671px; min-height: 0; }
.ltabs { display: flex; border-bottom: 2px solid #adb1b0; }
.ltabs span { padding: 3px 12px 0; font-size: 13.500px; line-height: 20px; }
.ltabs .on { width: 135px; height: 27px; border: 1.500px solid #b5b9b8; border-bottom: 0; background: #f7f7f7; color: #333; padding-top: 2px; }
.lbox { border: 2px solid #adb3b1; border-top: 0; margin-right: 1px; display: grid; grid-template-rows: 56px 25px 566px 22px; background: #f6faf7; overflow: hidden; }
.searchrow { display: flex; padding: 16px 0 0 16px; }
.sbox { width: 381px; height: 25px; border: 1px solid #a5aaa8; background: #fff; display: flex; justify-content: space-between; line-height: 23px; color: #9a9a9a; padding-left: 3px; font-size: 13.700px; }
.sbox i { width: 20px; border-left: 1px solid #a5aaa8; background: #f7f7f7; display: flex; align-items: center; justify-content: center; }
.findbtn { margin-left: 5px; width: 75px; height: 25px; border: 1px solid #a5aaa8; background: #f5f5f5; text-align: center; line-height: 23px; font-size: 13.700px; }
.keyhead { display: grid; grid-template-columns: 23px 1fr; border: solid #adb1b0; border-width: 1px 0; background: #f5f5f5; line-height: 23px; font-size: 13.400px; }
.keyhead span + span { border-left: 1px solid #adb1b0; padding-left: 4px; }
.treewrap { display: grid; grid-template-columns: 473px 22px; min-height: 0; }
.tree { display: grid; grid-template-rows: 26px 540px; min-height: 0; min-width: 0; }
.filter { display: grid; grid-template-columns: 23px 1fr; border-bottom: 1px solid #adb1b0; background: #fff; align-items: center; }
.filter > span { display: flex; align-items: center; justify-content: center; height: 100%; background: #f5f5f5; }
.filter .abc { margin-left: 6px; }
.abc { display: inline-flex; align-items: center; font: 700 8px/14px "Liberation Mono", monospace; color: #666; gap: 1px; }
.abc b { background: #6fa58f; color: #e6fff5; width: 9px; height: 14px; text-align: center; border-radius: 1px; }
.rows { display: grid; grid-template-columns: 23px 450px; overflow: hidden; }
.gut { border-right: 1px solid #adb1b0; background: #f5f5f5; padding: 173px 0 0 10px; }
.list { overflow: hidden; letter-spacing: .04px; }
.k { display: flex; height: 23.760px; background: #fff; }
.k:nth-child(odd) { background: #f6f6f6; }
.k .fo { width: 20px; height: 17px; margin-top: 5px; }
.k span { flex: 1; border-left: 1px solid #cfcfcf; border-bottom: 1px solid #d5d5d5; padding-left: 4px; line-height: 22px; overflow: hidden; }
.l0 { padding-left: 98px; } .l1 { padding-left: 114px; } .l2 { padding-left: 130px; letter-spacing: .2px; }
.ar { width: 8px; height: 8px; margin: 9px 3px 0 -11px; }
.ar.sh { width: 6px; height: 10px; margin: 7px 5px 0 -11px; }
.k.sel { background: #e5f4fd; }
.k.sel span { background: #fff; border: 1px dotted #333; border-right: 0; font-weight: 700; line-height: 21px; letter-spacing: .52px; }
.vscroll { background: #eee; display: grid; justify-items: center; align-content: start; padding-top: 7px; }
.vscroll i { width: 22px; height: 22px; background: #cdd2ce; margin: 503px 0 12px; }
.hscroll { background: #eee; display: flex; align-items: center; padding-left: 6px; }
.hscroll i { width: 247px; height: 22px; background: #cdd2ce; margin-left: 8px; }
.hscroll .r { margin: 0 6px 0 190px; }
.hscroll b { flex: 1; height: 22px; background: #f7f7f7; }
.splitter { padding: 337px 0 0 6px; }
.splitter i { display: block; width: 3px; height: 20px; background: repeating-linear-gradient(#666 0 3px, transparent 3px 5.500px); }
.values { padding-top: 26px; display: grid; grid-template-rows: 260px 19px 27px 366px; min-height: 0; overflow: hidden; }
.grid { border: 2px solid #adb3b1; display: grid; grid-template-rows: 40px 26px 190px; overflow: hidden; }
.group { color: #bbb; padding-left: 6px; line-height: 43px; background: #f6faf7; font-size: 13.500px; letter-spacing: -.15px; }
.gr { display: grid; grid-template-columns: 24px 130px 92px 38px 39px 39px 59px 19px; height: 26.250px; background: #fff; line-height: 25px; font-size: 13.200px; }
.gr > span { border-right: 1px solid #cfcfcf; border-bottom: 1px solid #cfcfcf; padding-left: 4px; overflow: hidden; }
.gr > span:first-child { background: #f5f5f5; border-bottom: 0; border-right-color: #adb1b0; }
.gr > .m { padding: 0; display: flex; align-items: center; justify-content: center; }
.gr.alt { background: #f6f6f6; }
.gr > .focus { background: #fff; }
.head { background: #f5f5f5; height: 26px; border: solid #adb1b0; border-width: 1px 0; line-height: 24px; }
.head > span { border-right-color: #adb1b0; border-bottom: 0; }
.flt { height: 27.500px; }
.flt > span { border-bottom: 2px solid #bbb; display: flex; align-items: center; padding-left: 6px; }
.gbody { display: grid; grid-template-columns: 420px 20px; overflow: hidden; }
.grows { overflow: hidden; }
.grows .gr { width: 440px; }
.cb { display: block; width: 16px; height: 16px; border: 1px solid #a5a9a7; background: #fff; }
.cb.f { background: #5b5f5d; border: 1px solid #a5a9a7; box-shadow: inset 0 0 0 3px #fff; }
.vscroll.g i { width: 20px; height: 110px; margin: 7px 0 43px; }
.hdots { padding: 8px 0 0 210px; }
.hdots i { display: block; width: 24px; height: 3px; background: repeating-linear-gradient(90deg, #666 0 3px, transparent 3px 5px); }
.vtabs { display: flex; font-size: 13.500px; }
.vtabs span { border-bottom: 1px solid #c6c8c7; flex: 1; padding-left: 12px; line-height: 27px; }
.vtabs .on { flex: none; width: 103px; padding-left: 13px; border: 1px solid #b8bbba; border-bottom: 0; color: #222; }
.form { border: solid #b8bbba; border-width: 0 0 1px 1px; display: grid; grid-template-columns: 106px 338px; grid-template-rows: 27px 28px 170px 55px; row-gap: 10px; padding-top: 5px; font-size: 13.300px; }
.form label { padding-left: 5px; line-height: 24px; }
.form .raw { padding-left: 7px; }
.field { border: solid #777; border-width: 3px 0 1px 2px; border-color: #7c7c7c #eee #e8e8e8 #7c7c7c; border-top-style: double; line-height: 17px; padding: 1px 0 0 0; color: #111; overflow: hidden; }
.bytes { letter-spacing: -.05px; }
.st1, .st2 { display: grid; line-height: 27px; font-family: "Noto Sans", sans-serif; font-size: 13.800px; letter-spacing: .08px; overflow: hidden; }
.st1 { grid-template-columns: 41px 57px 560px 66px 109px 126px; padding-top: 2px; padding-bottom: 3px; }
.st1 > span { border-left: 1px solid #c6c8c7; padding-left: 10px; overflow: hidden; }
.st1 > span:nth-child(2) { padding-left: 13px; }
.st1 > span:last-child { padding-left: 5px; letter-spacing: -.02px; }
.st1 > .m { border: 0; padding: 4px 0 0 9px; }
.st1 u { display: block; width: 535px; overflow: hidden; text-decoration: none; }
.st2 { grid-template-columns: 194px 93px 155px 222px 139px 123px 33px; border-top: 1px solid #c6c8c7; border-bottom: 1px solid #c6c8c7; line-height: 26px; }
.st2 > span { border-left: 1px solid #c6c8c7; padding-left: 9px; overflow: hidden; }
.st2 > .red { background: #f00; color: #8c1111; border: 0; padding-left: 11px; }
.vmtask { background: #20231f; display: grid; grid-template-columns: 60px 60px 60px 68px 58px 60px 64px 56px 70px 50px 107px 50px 46px 145px 5px; }
.vmtask .run { background: linear-gradient(#76b9ed, #76b9ed) center bottom / 50px 3px no-repeat; }
.vmtask .a { margin-right: 4px; }
.vmtask .on { background: linear-gradient(#76b9ed, #76b9ed) center bottom / 60px 3px no-repeat #555; }
.vmtask .e { justify-content: flex-end; }
.peek { border-left: 1px solid #666; }
.clock { background: #000; color: #fff; font-family: "Noto Sans", sans-serif; font-size: 14.300px; letter-spacing: -.3px; line-height: 23px; padding: 2px 58px 0 0; text-align: center; }
.vmbar { background: #1c2438; display: grid; grid-template-columns: 60px 29px 58px 29px 63px 82px 1fr; color: #fff; font-family: "Noto Sans CJK SC", "Noto Sans", sans-serif; padding-bottom: 1px; }
.vmbar > .c:nth-child(2) { margin: 0 -7px 0 -9px; }
.vmbar > .c:nth-child(4) { margin: 0 -8px; }
.vmbar > .info { padding-right: 5px; }
.vmname { height: 36px; margin-top: 2px; border: 1px solid #3f475a; border-radius: 6px; background: #161c2a; font-size: 15.500px; line-height: 34px; text-align: center; }
.timer { padding: 0 19px 0 0; text-align: right; font-size: 18px; line-height: 41px; }
.toast { position: absolute; left: 340px; top: 30px; width: 590px; height: 67px; border: 1px solid #238a0c; border-radius: 4px; background: #e9f3e7; display: flex; align-items: center; padding: 0 22px 0 20px; color: #1b1f27; font: 20px "Liberation Sans", sans-serif; }
.toast span { flex: 1; margin-left: 17px; }
.chat { position: absolute; left: 875px; top: 827px; width: 60px; height: 60px; border-radius: 50%; background: #1c2438; display: flex; align-items: center; justify-content: center; }

/* host taskbar */
.taskbar { background: #0f2f63; border-top: 1px solid #3d5a80; display: grid; grid-template-columns: 514px 60px 278px 58px 51px 60px 50px 60px 50px 60px 50px 60px 50px 143px 33px 64px 30px 30px 30px 86px 36px 54px; color: #fff; }
.weather { display: flex; padding: 5px 0 0 23px; }
.weather div { margin-left: 3px; padding-top: 2px; font-size: 14.800px; line-height: 20.500px; letter-spacing: -.3px; }
.weather span { color: #c9d4e5; }
.wsearch { width: 275px; height: 40px; margin: 9px 0 0 2px; border: 1px solid #4c6590; border-radius: 20px; background: #304d7c; display: flex; align-items: center; padding: 0 12px 0 13px; font-size: 16.500px; color: #d2dae6; letter-spacing: -.1px; }
.wsearch span { flex: 1; margin-left: 13px; }
.dot { background: radial-gradient(ellipse 4px 2px at center 51px, #a5b3cb 95%, transparent); }
.chrome { background: linear-gradient(#4cc2ff, #4cc2ff) center 48px / 20px 4px no-repeat, linear-gradient(#1c3f72, #1c3f72) center 5px / 46px 49px no-repeat; }
.lang, .wclock { font-size: 14.600px; line-height: 20px; text-align: center; padding-top: 10px; letter-spacing: -.3px; }
.wclock { text-align: right; padding-right: 1px; }
```
